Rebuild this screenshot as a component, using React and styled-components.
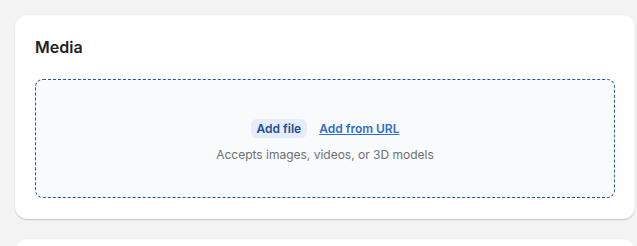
import React from 'react';
import styled, { createGlobalStyle } from 'styled-components';

const Global = createGlobalStyle`
  body {
    margin: 0;
    background: #f3f3f3;
    font-family: Inter, "Noto Sans", sans-serif;
    -webkit-font-smoothing: antialiased;
  }
`;

const Page = styled.div`
  display: flex;
  flex-direction: column;
  gap: 20px;
  padding: 15px 2px 0 15px;
`;

const Card = styled.section`
  background: #fff;
  border-radius: 12px;
  box-shadow: 0 1px 0 rgba(0, 0, 0, 0.07), 0 1px 2px rgba(0, 0, 0, 0.12), inset 0 0 0 1px rgba(0, 0, 0, 0.02);
  padding: ${p => p.$pad || '22px 20px 21px'};
  min-height: ${p => p.$min || 0}px;
`;

const Title = styled.h2`
  margin: 0 0 22px;
  font-size: 16px;
  line-height: 20px;
  font-weight: 600;
  color: #202223;
`;

const Dropzone = styled.div`
  height: 119px;
  border: 1px dashed #1f56a8;
  border-radius: 8px;
  background: #f9fafb;
  box-sizing: border-box;
  display: flex;
  flex-direction: column;
  align-items: center;
  justify-content: center;
  gap: 9px;
  padding-top: 4px;
`;

const Actions = styled.div`
  display: flex;
  align-items: center;
  gap: 12px;
`;

const AddButton = styled.button`
  border: 0;
  background: #e4edfb;
  color: #1f4c8f;
  font: 600 12px/19px Inter, "Noto Sans", sans-serif;
  padding: 0 6px;
  border-radius: 6px;
  height: 19px;
  cursor: pointer;
`;

const Link = styled.a`
  color: #2c6ecb;
  font: 600 12px/19px Inter, "Noto Sans", sans-serif;
  text-decoration: underline;
  cursor: pointer;
`;

const Hint = styled.p`
  margin: 0;
  font-size: 12px;
  line-height: 16px;
  color: #6d7175;
`;

export default function App() {
  return (
    <>
      <Global />
      <Page>
        <Card>
          <Title>Media</Title>
          <Dropzone>
            <Actions>
              <AddButton>Add file</AddButton>
              <Link>Add from URL</Link>
            </Actions>
            <Hint>Accepts images, videos, or 3D models</Hint>
          </Dropzone>
        </Card>
        <Card $pad="0" $min={40} />
      </Page>
    </>
  );
}
